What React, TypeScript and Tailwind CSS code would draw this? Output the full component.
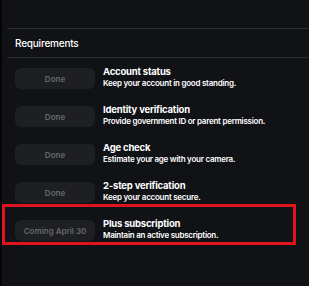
import React from 'react';

const ITEMS = [
  { status: 'Done', title: 'Account status', desc: 'Keep your account in good standing.' },
  { status: 'Done', title: 'Identity verification', desc: 'Provide government ID or parent permission.' },
  { status: 'Done', title: 'Age check', desc: 'Estimate your age with your camera.' },
  { status: 'Done', title: '2-step verification', desc: 'Keep your account secure.' },
  { status: 'Coming April 30', title: 'Plus subscription', desc: 'Maintain an active subscription.', highlight: true },
];

export default function App() {
  return (
    <div
      className="relative w-[309px] h-[286px] bg-[#111216] border-l-2 border-[#050506] overflow-hidden"
      style={{ fontFamily: 'Inter, "Noto Sans", sans-serif' }}
    >
      <div className="ml-[5px] mt-[28px] border-t border-[#2a2b30]">
        <div className="h-[28px] flex items-center pl-[8px] text-[10px] font-medium text-white tracking-[-0.2px]">
          Requirements
        </div>
      </div>
      <div className="ml-[5px] border-t border-[#2a2b30] pt-[10px] pl-[8px] flex flex-col gap-[17px]">
        {ITEMS.map(item => (
          <div key={item.title} className="relative flex items-start gap-[8px] h-[21px]">
            <div className="w-[80px] h-[21px] rounded-md bg-[#1e1f23] flex items-center justify-center text-[8px] font-semibold text-[#66676c] shrink-0">
              {item.status}
            </div>
            <div className="flex flex-col leading-none -mt-[1px]">
              <span className="text-[9.5px] font-bold text-white tracking-[-0.2px]">{item.title}</span>
              <span className="mt-[2px] text-[8px] font-semibold text-white tracking-[-0.25px]">{item.desc}</span>
            </div>
            {item.highlight && (
              <div className="absolute left-[-13px] top-[-16px] w-[294px] h-[41px] border-[3px] border-[#e0141c] pointer-events-none" />
            )}
          </div>
        ))}
      </div>
    </div>
  );
}
